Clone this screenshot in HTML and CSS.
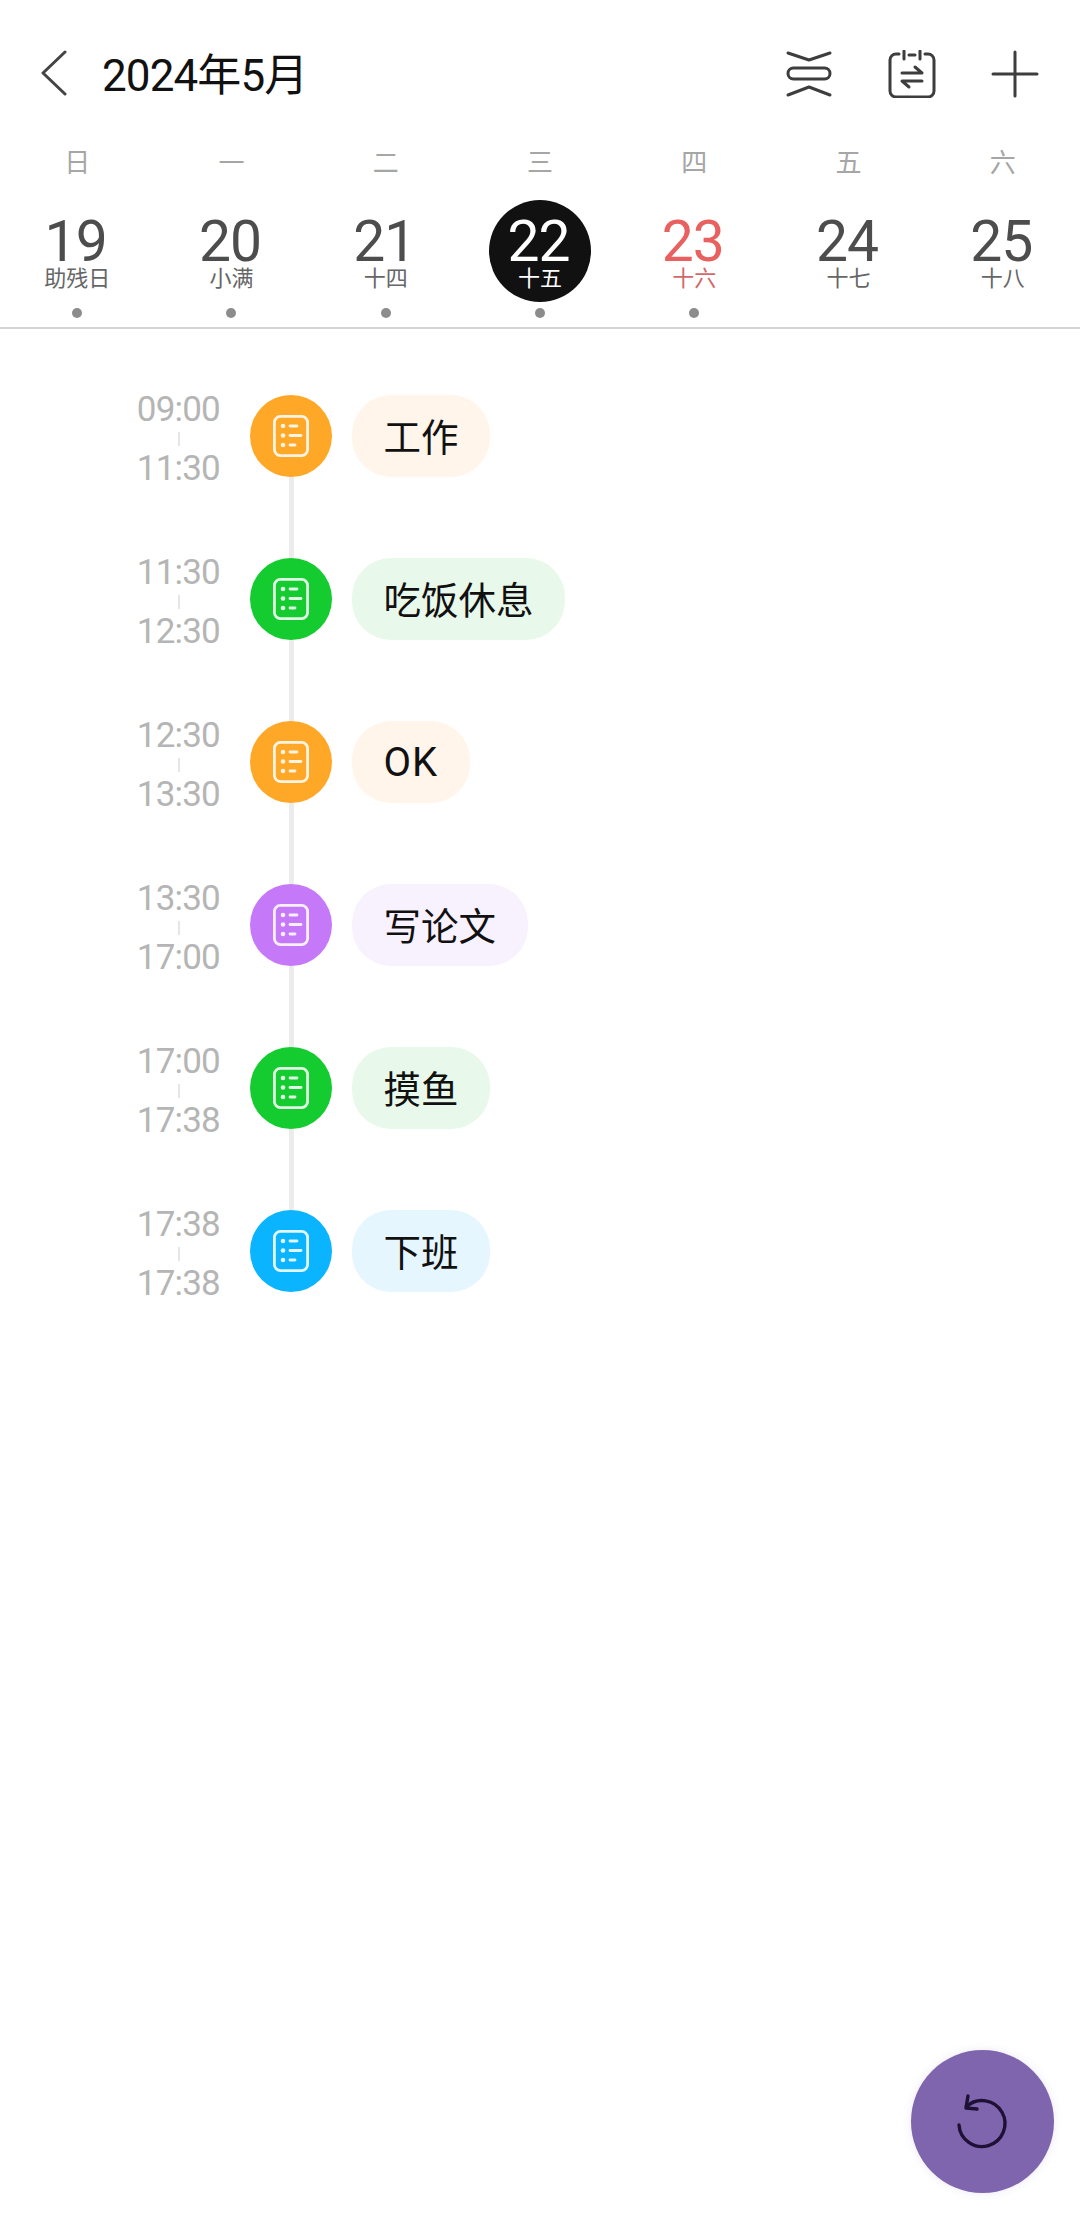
FILE: index.html
```html
<!DOCTYPE html>
<html lang="zh-CN">

<head>
    <meta charset="UTF-8">
    <meta name="viewport" content="width=device-width, initial-scale=1.0">
    <title>日程</title>
    <link rel="stylesheet" href="styles.css">
</head>

<body>
    <svg class="defs" width="0" height="0">
        <symbol id="note" viewBox="0 0 36 42">
            <rect x="1.4" y="1.4" width="33.2" height="39.2" rx="6" fill="none" stroke="currentColor" stroke-width="2.8"/>
            <g fill="currentColor">
                <circle cx="10" cy="11" r="2.3"/>
                <circle cx="10" cy="20.5" r="2.3"/>
                <circle cx="10" cy="30" r="2.3"/>
            </g>
            <g stroke="currentColor" stroke-width="2.8" stroke-linecap="round">
                <path d="M17 11H24"/>
                <path d="M17 20.5H28"/>
                <path d="M17 30H22"/>
            </g>
        </symbol>
    </svg>

    <header class="top">
        <svg class="back" width="28" height="46" viewBox="0 0 28 46">
            <path d="M25 2L3 23L25 44" fill="none" stroke="#444" stroke-width="3" stroke-linecap="round" stroke-linejoin="round"/>
        </svg>
        <h1 class="title">2024年5月</h1>
        <div class="actions">
            <svg width="48" height="48" viewBox="0 0 48 48" fill="none" stroke="#3d3d3d" stroke-width="3" stroke-linecap="round" stroke-linejoin="round">
                <path d="M3 3L24 10L45 3"/>
                <rect x="3" y="18" width="42" height="11" rx="5.5"/>
                <path d="M3 45L24 37L45 45"/>
            </svg>
            <svg width="48" height="48" viewBox="0 0 48 48" fill="none" stroke="#3d3d3d" stroke-width="3" stroke-linecap="round" stroke-linejoin="round">
                <path d="M11 4H8A6 6 0 0 0 2 10V41A6 6 0 0 0 8 47H40A6 6 0 0 0 46 41V10A6 6 0 0 0 40 4H37"/>
                <path d="M16 1V9M32 1V9M21 5H27"/>
                <path d="M14 23H34L27 17"/>
                <path d="M34 31H14L21 37"/>
            </svg>
            <svg width="48" height="48" viewBox="0 0 48 48" fill="none" stroke="#3d3d3d" stroke-width="3" stroke-linecap="round">
                <path d="M24 2V46M2 24H46"/>
            </svg>
        </div>
    </header>

    <section class="week">
        <div class="day">
            <span class="weekday">日</span>
            <div class="badge"><span class="num">19</span><span class="lunar">助残日</span></div>
            <i class="dot"></i>
        </div>
        <div class="day">
            <span class="weekday">一</span>
            <div class="badge"><span class="num">20</span><span class="lunar">小满</span></div>
            <i class="dot"></i>
        </div>
        <div class="day">
            <span class="weekday">二</span>
            <div class="badge"><span class="num">21</span><span class="lunar">十四</span></div>
            <i class="dot"></i>
        </div>
        <div class="day today">
            <span class="weekday">三</span>
            <div class="badge"><span class="num">22</span><span class="lunar">十五</span></div>
            <i class="dot"></i>
        </div>
        <div class="day holiday">
            <span class="weekday">四</span>
            <div class="badge"><span class="num">23</span><span class="lunar">十六</span></div>
            <i class="dot"></i>
        </div>
        <div class="day">
            <span class="weekday">五</span>
            <div class="badge"><span class="num">24</span><span class="lunar">十七</span></div>
            <i class="dot none"></i>
        </div>
        <div class="day">
            <span class="weekday">六</span>
            <div class="badge"><span class="num">25</span><span class="lunar">十八</span></div>
            <i class="dot none"></i>
        </div>
    </section>

    <main class="list">
        <div class="row orange">
            <div class="time"><span>09:00</span><i class="tick"></i><span>11:30</span></div>
            <div class="node"><div class="circle"><svg width="36" height="42"><use href="#note"/></svg></div><i class="line"></i></div>
            <div class="pill">工作</div>
        </div>
        <div class="row green">
            <div class="time"><span>11:30</span><i class="tick"></i><span>12:30</span></div>
            <div class="node"><div class="circle"><svg width="36" height="42"><use href="#note"/></svg></div><i class="line"></i></div>
            <div class="pill">吃饭休息</div>
        </div>
        <div class="row orange">
            <div class="time"><span>12:30</span><i class="tick"></i><span>13:30</span></div>
            <div class="node"><div class="circle"><svg width="36" height="42"><use href="#note"/></svg></div><i class="line"></i></div>
            <div class="pill latin">OK</div>
        </div>
        <div class="row purple">
            <div class="time"><span>13:30</span><i class="tick"></i><span>17:00</span></div>
            <div class="node"><div class="circle"><svg width="36" height="42"><use href="#note"/></svg></div><i class="line"></i></div>
            <div class="pill">写论文</div>
        </div>
        <div class="row green">
            <div class="time"><span>17:00</span><i class="tick"></i><span>17:38</span></div>
            <div class="node"><div class="circle"><svg width="36" height="42"><use href="#note"/></svg></div><i class="line"></i></div>
            <div class="pill">摸鱼</div>
        </div>
        <div class="row blue">
            <div class="time"><span>17:38</span><i class="tick"></i><span>17:38</span></div>
            <div class="node"><div class="circle"><svg width="36" height="42"><use href="#note"/></svg></div></div>
            <div class="pill">下班</div>
        </div>
    </main>

    <button class="fab">
        <svg width="60" height="60" viewBox="0 0 60 60" fill="none" stroke="#1f1035" stroke-width="3.4" stroke-linecap="round" stroke-linejoin="round">
            <path d="M7 32A23 23 0 1 0 14.5 13.5"/>
            <path d="M16 3L14 15L25 16"/>
        </svg>
    </button>
</body>

</html>
```

FILE: styles.css
```css
* {
    box-sizing: border-box;
}

html,
body {
    margin: 0;
    height: 2219px;
    background-color: #fff;
    overflow: hidden;
}

body {
    position: relative;
    font-family: Roboto, "Noto Sans CJK SC", sans-serif;
}

.defs {
    display: block;
}

.top {
    display: flex;
    align-items: center;
    height: 146px;
    padding: 0 41px 0 40px;
}

.title {
    margin: -2px 0 0 34px;
    font-size: 44px;
    font-weight: 400;
    letter-spacing: -0.9px;
    color: #111;
}

.actions {
    display: flex;
    gap: 55px;
    margin: 2px 0 0 auto;
}

.week {
    display: grid;
    grid-template-columns: repeat(7, 1fr);
    padding-bottom: 9px;
    border-bottom: 2px solid #d4d4d4;
}

.day {
    display: flex;
    flex-direction: column;
    align-items: center;
}

.weekday {
    height: 34px;
    line-height: 34px;
    font-size: 26px;
    color: #a6a6a6;
}

.badge {
    display: flex;
    flex-direction: column;
    align-items: center;
    width: 102px;
    height: 102px;
    margin-top: 20px;
    padding-top: 16px;
    border-radius: 50%;
}

.num {
    height: 49px;
    padding-right: 3px;
    line-height: 52px;
    font-size: 57px;
    letter-spacing: -1px;
    color: #4d4d4d;
}

.lunar {
    height: 28px;
    line-height: 28px;
    font-size: 22px;
    color: #666;
}

.dot {
    width: 10px;
    height: 10px;
    margin-top: 6px;
    border-radius: 50%;
    background-color: #8c8c8c;
}

.dot.none {
    background-color: transparent;
}

.today .badge {
    background-color: #111;
}

.today .num,
.today .lunar {
    color: #fff;
}

.holiday .num {
    color: #e8605f;
}

.holiday .lunar {
    color: #d2686a;
}

.list {
    padding-top: 66px;
}

.row {
    display: flex;
    align-items: flex-start;
}

.time {
    display: flex;
    flex-direction: column;
    align-items: flex-end;
    width: 220px;
    margin-top: -5px;
    font-size: 35px;
    letter-spacing: -0.8px;
    line-height: 40px;
    color: #b5b5b5;
}

.tick {
    width: 2px;
    height: 14px;
    margin: 2px 40px 3px 0;
    background-color: #e6e6e6;
}

.node {
    display: flex;
    flex-direction: column;
    align-items: center;
    margin-left: 30px;
}

.circle {
    display: flex;
    align-items: center;
    justify-content: center;
    width: 82px;
    height: 82px;
    border-radius: 50%;
    color: rgba(255, 255, 255, 0.88);
}

.line {
    width: 5px;
    height: 81px;
    background-color: #ececec;
}

.pill {
    height: 82px;
    margin-left: 20px;
    padding: 0 31.5px;
    border-radius: 39px;
    font-size: 37.5px;
    line-height: 86px;
    color: #111;
}

.pill.latin {
    font-size: 40px;
    letter-spacing: 1px;
    line-height: 84px;
}

.orange .circle {
    background-color: #ffa726;
}

.orange .pill {
    background-color: #fff5eb;
}

.green .circle {
    background-color: #14cc30;
}

.green .pill {
    background-color: #e8f8ea;
}

.purple .circle {
    background-color: #c578f7;
}

.purple .pill {
    background-color: #f8f1fe;
}

.blue .circle {
    background-color: #0ab4ff;
}

.blue .pill {
    background-color: #e5f6fe;
}

.fab {
    position: absolute;
    left: 911px;
    top: 2050px;
    display: flex;
    align-items: center;
    justify-content: center;
    width: 143px;
    height: 143px;
    padding: 2px 2px 0 0;
    border: none;
    border-radius: 50%;
    background-color: #7f65ae;
    box-shadow: 0 0 8px rgba(127, 101, 174, 0.15);
}
```
